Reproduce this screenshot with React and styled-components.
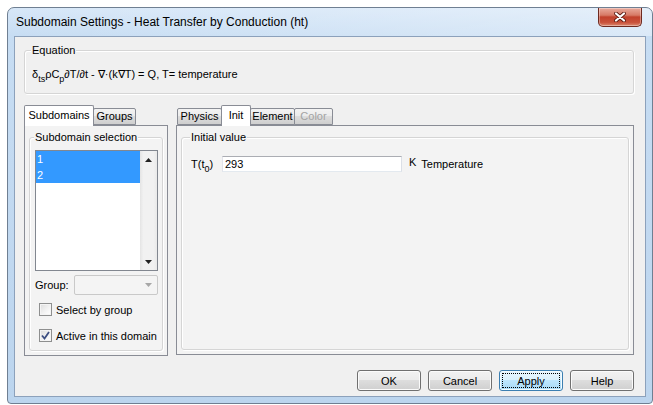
import React from "react";
import styled, { createGlobalStyle } from "styled-components";

const GlobalStyle = createGlobalStyle`
  html, body {
    margin: 0;
    padding: 0;
    background: #ffffff;
  }
  body {
    font-family: "Liberation Sans", Arial, sans-serif;
    font-size: 11px;
    color: #000;
  }
`;

const Window = styled.div`
  box-sizing: border-box;
  width: 646px;
  height: 397px;
  margin: 7px 0 0 7px;
  border: 1px solid #6f7f92;
  border-radius: 7px 7px 4px 4px;
  background: linear-gradient(180deg, #d7e7f8 0px, #c7ddf3 28px, #bcd5ee 100%);
  display: flex;
  flex-direction: column;
  overflow: hidden;
`;

const TitleBar = styled.div`
  height: 28px;
  flex: none;
  display: flex;
  align-items: flex-start;
  justify-content: space-between;
  padding: 0 10px 0 8px;
  background: linear-gradient(90deg, rgba(255, 255, 255, 0) 0%, rgba(255, 255, 255, 0.35) 100%);
`;

const Title = styled.div`
  font-size: 12px;
  line-height: 28px;
  color: #000;
`;

const CloseButton = styled.div`
  box-sizing: border-box;
  width: 44px;
  height: 19px;
  border: 1px solid #6e2a20;
  border-top: none;
  border-radius: 0 0 5px 5px;
  background: linear-gradient(180deg, #e9aa9c 0%, #d77a66 40%, #c1412c 50%, #c9523b 80%, #dc8a70 100%);
  box-shadow: inset 0 0 0 1px rgba(255, 255, 255, 0.35);
  display: flex;
  align-items: center;
  justify-content: center;
`;

const Client = styled.div`
  flex: 1;
  margin: 0 6px 6px;
  border: 1px solid #8ca1bb;
  background: #f0f0f0;
  display: flex;
  flex-direction: column;
  padding: 7px 11px 0 9px;
`;

const Group = styled.fieldset`
  margin: 0;
  min-width: 0;
  padding: ${(p) => p.$pad || "8px 7px 10px"};
  border: 1px solid #d5d5d5;
  border-radius: 3px;
  box-shadow: inset 1px 1px 0 #ffffff, 1px 1px 0 #ffffff;
  display: flex;
  flex-direction: column;
  flex: ${(p) => (p.$fill ? 1 : "none")};
`;

const Legend = styled.legend`
  padding: 0 1px;
  margin-left: -1px;
  line-height: 13px;
  background: ${(p) => p.$bg || "#f0f0f0"};
`;

const Equation = styled.div`
  line-height: 18px;
  white-space: nowrap;
`;

const Sub = styled.span`
  font-size: 9px;
  line-height: 0;
  vertical-align: -4px;
`;

const PaneRow = styled.div`
  display: flex;
  gap: 8px;
  height: 250px;
  margin-top: 11px;
`;

const Pane = styled.div`
  display: flex;
  flex-direction: column;
  width: ${(p) => (p.$w ? `${p.$w}px` : "auto")};
  flex: ${(p) => (p.$w ? "none" : 1)};
`;

const TabStrip = styled.div`
  height: 20px;
  display: flex;
  align-items: flex-end;
  padding-left: ${(p) => p.$indent || 0}px;
`;

const Tab = styled.div`
  box-sizing: border-box;
  position: relative;
  width: ${(p) => p.$w}px;
  height: ${(p) => (p.$active ? 21 : 17)}px;
  margin-bottom: ${(p) => (p.$active ? -1 : 0)}px;
  margin-right: -1px;
  z-index: ${(p) => (p.$active ? 2 : 1)};
  border: 1px solid #898c95;
  border-bottom: ${(p) => (p.$active ? "none" : "1px solid #898c95")};
  border-radius: 2px 2px 0 0;
  background: ${(p) =>
    p.$active
      ? "#ffffff"
      : "linear-gradient(180deg, #f3f3f3 0%, #ebebeb 50%, #dddddd 50%, #cfcfcf 100%)"};
  color: ${(p) => (p.$disabled ? "#a3a3a3" : "#000")};
  text-align: center;
  line-height: ${(p) => (p.$active ? 19 : 15)}px;
`;

const Panel = styled.div`
  flex: 1;
  display: flex;
  flex-direction: column;
  border: 1px solid #898c95;
  background: #f3f3f3;
  padding: 5px 4px 4px;
`;

const ListBox = styled.div`
  display: flex;
  height: 119px;
  margin-top: 6px;
  border: 1px solid #828790;
  background: #fff;
`;

const ListItems = styled.div`
  flex: 1;
`;

const ListItem = styled.div`
  height: 16px;
  line-height: 16px;
  padding-left: 1px;
  background: ${(p) => (p.$selected ? "#3399ff" : "transparent")};
  color: ${(p) => (p.$selected ? "#ffffff" : "#000")};
`;

const ScrollBar = styled.div`
  width: 17px;
  display: flex;
  flex-direction: column;
  justify-content: space-between;
  background: linear-gradient(90deg, #e4e4e4 0%, #f1f1f1 20%, #f1f1f1 80%, #e9e9e9 100%);
`;

const ScrollArrow = styled.div`
  height: 17px;
  display: flex;
  align-items: center;
  justify-content: center;
`;

const FieldRow = styled.div`
  display: flex;
  align-items: center;
  margin-top: ${(p) => p.$top || 0}px;
  padding-left: ${(p) => p.$indent || 0}px;
`;

const FieldLabel = styled.span`
  width: ${(p) => p.$w}px;
  flex: none;
`;

const Combo = styled.div`
  box-sizing: border-box;
  flex: 1;
  height: 20px;
  border: 1px solid #c9c9c9;
  border-radius: 2px;
  background: #f4f4f4;
  display: flex;
  align-items: center;
  justify-content: flex-end;
  padding-right: 5px;
`;

const CheckBox = styled.div`
  box-sizing: border-box;
  width: 13px;
  height: 13px;
  flex: none;
  border: 1px solid #8e8f8f;
  background: linear-gradient(135deg, #dcdcdc 0%, #f4f4f4 60%, #ffffff 100%);
  box-shadow: inset 0 0 0 1px #f4f4f4;
  display: flex;
  align-items: center;
  justify-content: center;
  margin-right: 4px;
`;

const TextInput = styled.div`
  box-sizing: border-box;
  width: 180px;
  height: 16px;
  border: 1px solid #abadb3;
  border-top-color: #abadb3;
  border-left-color: #e2e3ea;
  border-right-color: #dbdfe6;
  border-bottom-color: #e3e9ef;
  background: #fff;
  line-height: 14px;
  padding-left: 2px;
`;

const Unit = styled.span`
  margin: 0 5px 0 7px;
  position: relative;
  top: -2px;
`;

const ButtonRow = styled.div`
  display: flex;
  justify-content: flex-end;
  gap: 7px;
  margin-top: 15px;
`;

const Button = styled.div`
  box-sizing: border-box;
  width: 64px;
  height: 21px;
  border: 1px solid ${(p) => (p.$focused ? "#3c7fb1" : "#707070")};
  border-radius: 3px;
  background: ${(p) =>
    p.$focused
      ? "linear-gradient(180deg, #eaf6fd 0%, #d9f0fc 50%, #bee6fd 50%, #a7d9f5 100%)"
      : "linear-gradient(180deg, #f2f2f2 0%, #ebebeb 50%, #dddddd 50%, #cfcfcf 100%)"};
  box-shadow: inset 0 0 0 1px ${(p) => (p.$focused ? "#f3fbfe" : "#fbfbfb")};
  display: flex;
  align-items: center;
  justify-content: center;
  position: relative;
  outline: ${(p) => (p.$focused ? "1px dotted #000" : "none")};
  outline-offset: -4px;
`;

function CloseGlyph() {
  return (
    <svg width="12" height="10" viewBox="0 0 12 10">
      <path d="M2 1.5 L10 8.5 M10 1.5 L2 8.5" stroke="#5b1c13" strokeWidth="3.8" strokeLinecap="round" fill="none" />
      <path d="M2 1.5 L10 8.5 M10 1.5 L2 8.5" stroke="#ffffff" strokeWidth="2.2" strokeLinecap="round" fill="none" />
    </svg>
  );
}

function Arrow({ down, color = "#222" }) {
  return (
    <svg width="7" height="4" viewBox="0 0 7 4">
      <polygon points={down ? "0,0 7,0 3.5,4" : "0,4 7,4 3.5,0"} fill={color} />
    </svg>
  );
}

function Check() {
  return (
    <svg width="9" height="9" viewBox="0 0 9 9">
      <path d="M1 4.5 L3.5 7.5 L8 1" stroke="#3d4f82" strokeWidth="1.8" fill="none" />
    </svg>
  );
}

export default function App() {
  return (
    <>
      <GlobalStyle />
      <Window>
        <TitleBar>
          <Title>Subdomain Settings - Heat Transfer by Conduction (ht)</Title>
          <CloseButton>
            <CloseGlyph />
          </CloseButton>
        </TitleBar>
        <Client>
          <Group>
            <Legend>Equation</Legend>
            <Equation>
              δ<Sub>ts</Sub>ρC<Sub>p</Sub>∂T/∂t - ∇·(k∇T) = Q, T= temperature
            </Equation>
          </Group>

          <PaneRow>
            <Pane $w={144}>
              <TabStrip>
                <Tab $active $w={70}>Subdomains</Tab>
                <Tab $w={43}>Groups</Tab>
              </TabStrip>
              <Panel>
                <Group $fill $pad="0 4px 8px 5px">
                  <Legend $bg="#f3f3f3">Subdomain selection</Legend>
                  <ListBox>
                    <ListItems>
                      <ListItem $selected>1</ListItem>
                      <ListItem $selected>2</ListItem>
                    </ListItems>
                    <ScrollBar>
                      <ScrollArrow>
                        <Arrow />
                      </ScrollArrow>
                      <ScrollArrow>
                        <Arrow down />
                      </ScrollArrow>
                    </ScrollBar>
                  </ListBox>
                  <FieldRow $top={4}>
                    <FieldLabel $w={39}>Group:</FieldLabel>
                    <Combo>
                      <Arrow down color="#a7a7a7" />
                    </Combo>
                  </FieldRow>
                  <FieldRow $top={8} $indent={4}>
                    <CheckBox />
                    Select by group
                  </FieldRow>
                  <FieldRow $top={13} $indent={4}>
                    <CheckBox>
                      <Check />
                    </CheckBox>
                    Active in this domain
                  </FieldRow>
                </Group>
              </Panel>
            </Pane>

            <Pane>
              <TabStrip $indent={1}>
                <Tab $w={45}>Physics</Tab>
                <Tab $active $w={30}>Init</Tab>
                <Tab $w={45}>Element</Tab>
                <Tab $disabled $w={39}>Color</Tab>
              </TabStrip>
              <Panel>
                <Group $fill $pad="0 8px 8px 9px">
                  <Legend $bg="#f3f3f3">Initial value</Legend>
                  <FieldRow $top={12}>
                    <FieldLabel $w={31}>
                      T(t<Sub>0</Sub>)
                    </FieldLabel>
                    <TextInput>293</TextInput>
                    <Unit>K</Unit>
                    Temperature
                  </FieldRow>
                </Group>
              </Panel>
            </Pane>
          </PaneRow>

          <ButtonRow>
            <Button>OK</Button>
            <Button>Cancel</Button>
            <Button $focused>Apply</Button>
            <Button>Help</Button>
          </ButtonRow>
        </Client>
      </Window>
    </>
  );
}
